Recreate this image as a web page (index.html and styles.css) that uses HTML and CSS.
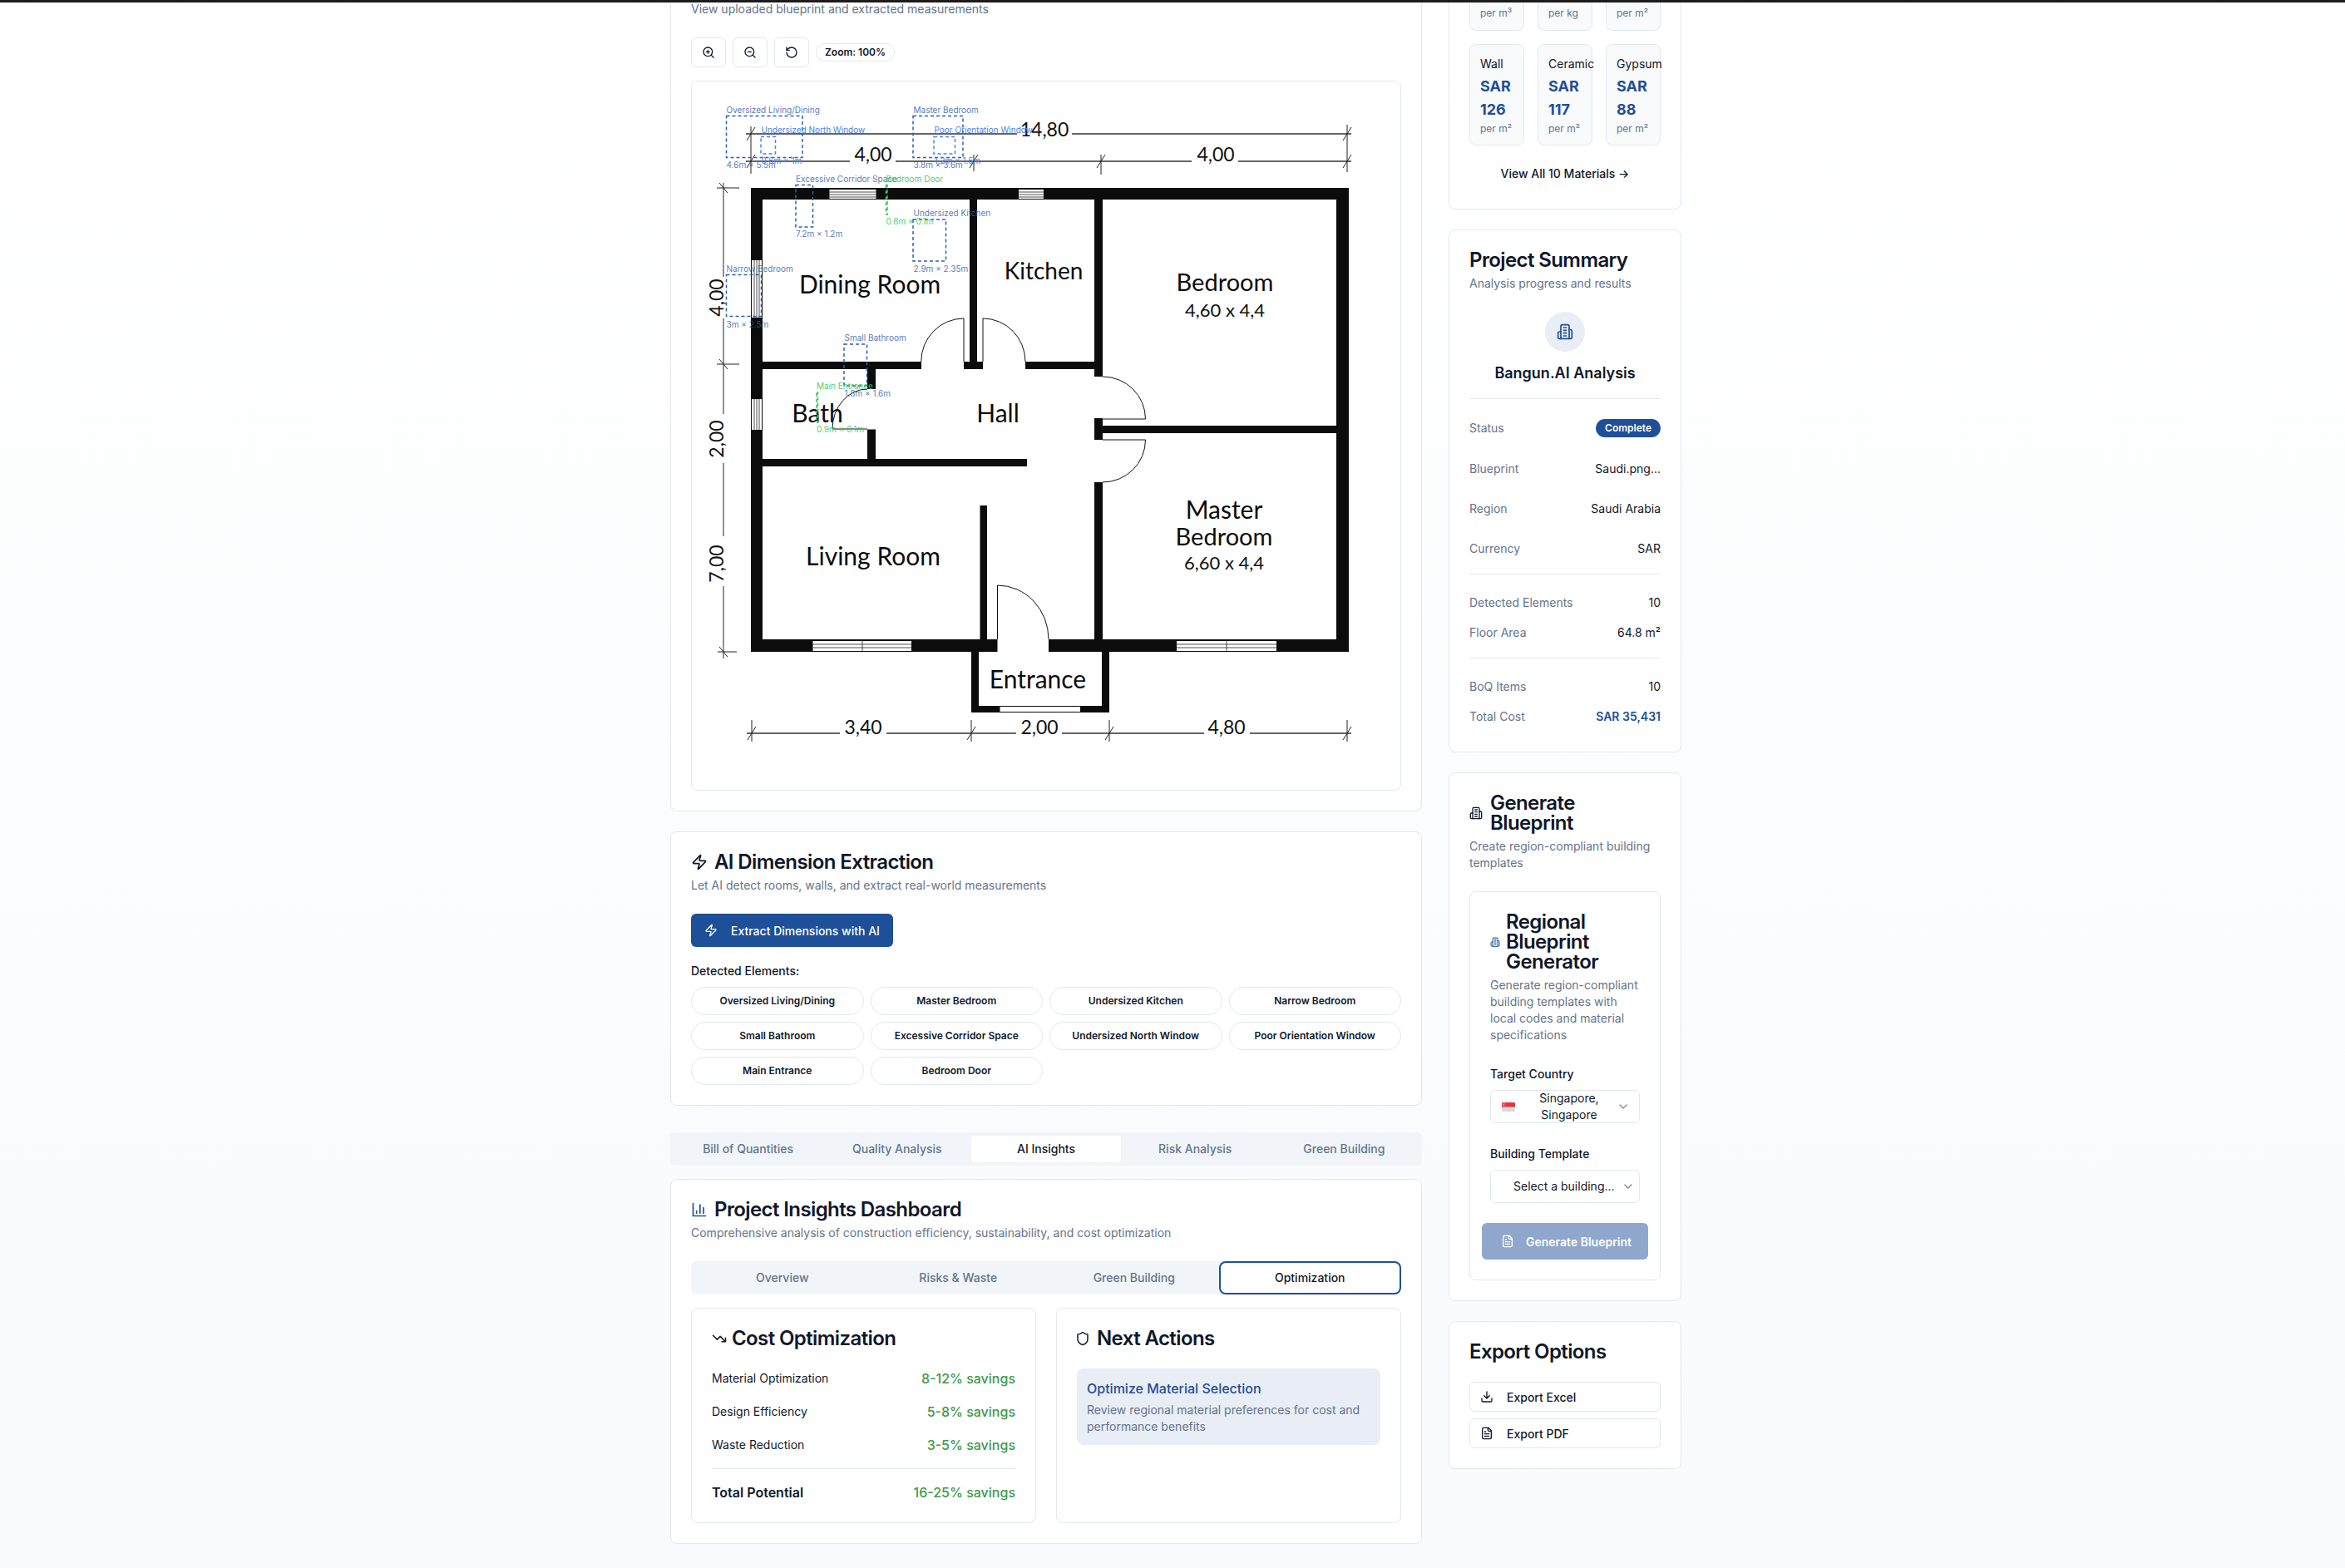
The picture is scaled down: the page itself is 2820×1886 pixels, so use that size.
FILE: index.html
```html
<!DOCTYPE html>
<html lang="en">
<head>
    <meta charset="UTF-8">
    <meta name="viewport" content="width=device-width, initial-scale=1.0">
    <title>Bangun.AI Analysis</title>
    <link rel="stylesheet" href="styles.css">
</head>
<body>

<div class="top-bar"></div>

<div class="page">
    <main class="left-col">

        <section class="card card-clipped">
            <p class="card-desc viewer-desc">View uploaded blueprint and extracted measurements</p>
            <div class="viewer-tools">
                <button class="tool-btn"><svg class="icon" viewBox="0 0 24 24"><circle cx="11" cy="11" r="8"/><path d="M21 21l-4.35-4.35M11 8v6M8 11h6"/></svg></button>
                <button class="tool-btn"><svg class="icon" viewBox="0 0 24 24"><circle cx="11" cy="11" r="8"/><path d="M21 21l-4.35-4.35M8 11h6"/></svg></button>
                <button class="tool-btn"><svg class="icon" viewBox="0 0 24 24"><path d="M3 12a9 9 0 1 0 9-9 9.75 9.75 0 0 0-6.74 2.74L3 8"/><path d="M3 3v5h5"/></svg></button>
                <span class="zoom-pill">Zoom: 100%</span>
            </div>
            <div class="plan-box">
                <!-- viewBox uses page coordinates so points can be read straight off the screenshot -->
                <svg class="plan" viewBox="832 98 852 852">
                    <g class="walls">
                        <rect x="903" y="226" width="719" height="14"/>
                        <rect x="903" y="226" width="14" height="558"/>
                        <rect x="1607" y="226" width="15" height="558"/>
                        <rect x="903" y="769" width="296.5" height="15"/>
                        <rect x="1261" y="769" width="361" height="15"/>
                        <rect x="1166" y="240" width="9" height="195"/>
                        <rect x="1316" y="240" width="10" height="213"/>
                        <rect x="917" y="435" width="191" height="9"/>
                        <rect x="1159" y="435" width="23" height="9"/>
                        <rect x="1233" y="435" width="83" height="9"/>
                        <rect x="1043" y="444" width="10" height="24"/>
                        <rect x="1043" y="516.5" width="10" height="36"/>
                        <rect x="917" y="552" width="318" height="9"/>
                        <rect x="1316" y="503" width="10" height="26"/>
                        <rect x="1326" y="512" width="281" height="9"/>
                        <rect x="1316" y="580" width="10" height="189"/>
                        <rect x="1178.5" y="608" width="8.5" height="161"/>
                        <rect x="1168" y="784" width="9" height="73"/>
                        <rect x="1325" y="784" width="9" height="73"/>
                        <rect x="1168" y="849" width="166" height="8"/>
                    </g>
                    <g class="windows">
                        <rect x="997.5" y="228" width="56" height="11"/>
                        <rect x="1225" y="228" width="30" height="11"/>
                        <rect x="904" y="313" width="12" height="69"/>
                        <rect x="904" y="480" width="12" height="37"/>
                        <rect x="977.5" y="771" width="118.5" height="12"/>
                        <rect x="1415" y="771" width="120" height="12"/>
                        <rect x="1202.5" y="850" width="96.5" height="6"/>
                    </g>
                    <path class="thin" d="M997.5 231H1053.5M997.5 234H1053.5M997.5 237H1053.5M1225 231H1255M1225 234H1255M1225 237H1255M907 313V382M910 313V382M913 313V382M907 480V517M910 480V517M913 480V517M977.5 775H1096M977.5 779H1096M1415 775H1535M1415 779H1535M1037 771V783M1475 771V783"/>
                    <path class="door" d="M1107.7 435A51.3 52 0 0 1 1159 383V435M1182 435V383A51 52 0 0 1 1233 435M1326 453A51.5 51 0 0 1 1377.5 504H1326M1326 529H1377.5A51.5 51 0 0 1 1326 580M1043 468A42 48 0 0 0 1001 516H1043M1199.5 769V704A61.5 65 0 0 1 1261 769"/>
                    <path class="dim" d="M897 161H1223M1289 161H1625M897 194H1022M1077 194H1433M1489 194H1625M898 882H1010M1066 882H1222M1277 882H1448M1503 882H1625"/>
                    <path class="dim-thin" d="M903 152V209M1171 186V206M1324 186V210M1620 150V207M870 220V333M870 383V498M870 557V645M870 705V792M862 226H889M862 438H889M863 784H886M904 866V892M1168 866V892M1334 866V892M1620 866V892"/>
                    <path class="dim-thin" d="M898 169L908 153M898 202L908 186M1166 202L1176 186M1319 202L1329 186M1615 169L1625 153M1615 202L1625 186M865 220L875 232M865 432L875 444M865 778L875 790M899 890L909 874M1163 890L1173 874M1329 890L1339 874M1615 890L1625 874"/>

                    <text class="dim-num" x="1256" y="164">14,80</text>
                    <text class="dim-num" x="1050" y="194">4,00</text>
                    <text class="dim-num" x="1462" y="194">4,00</text>
                    <text class="dim-num" x="1038" y="883">3,40</text>
                    <text class="dim-num" x="1250" y="883">2,00</text>
                    <text class="dim-num" x="1475" y="883">4,80</text>
                    <text class="dim-num" transform="rotate(-90 870 358)" x="870" y="358">4,00</text>
                    <text class="dim-num" transform="rotate(-90 870 528)" x="870" y="528">2,00</text>
                    <text class="dim-num" transform="rotate(-90 870 678)" x="870" y="678">7,00</text>

                    <text class="room" x="1046" y="352.5">Dining Room</text>
                    <text class="room room-kitchen" x="1255" y="335.5">Kitchen</text>
                    <text class="room room-tight" x="1473" y="349.5">Bedroom</text>
                    <text class="room-size" x="1473" y="380.5">4,60 x 4,4</text>
                    <text class="room" x="983" y="508">Bath</text>
                    <text class="room" x="1200" y="508">Hall</text>
                    <text class="room" x="1472" y="623.5">Master</text>
                    <text class="room room-tight" x="1472" y="655.5">Bedroom</text>
                    <text class="room-size" x="1472" y="684.5">6,60 x 4,4</text>
                    <text class="room" x="1050" y="679.5">Living Room</text>
                    <text class="room" x="1248" y="827.5">Entrance</text>

                    <g class="mark mark-navy">
                        <rect x="873.5" y="139.5" width="91.5" height="50"/>
                        <text x="873.5" y="135.5">Oversized Living/Dining</text>
                        <text x="873.5" y="201.5">4.6m × 5.5m</text>
                        <rect x="1098" y="139.5" width="60" height="50"/>
                        <text x="1098.5" y="135.5">Master Bedroom</text>
                        <text x="1098.5" y="201.5">3.8m × 3.6m</text>
                        <rect x="957" y="222.5" width="20.5" height="50.5"/>
                        <text x="957" y="218.5">Excessive Corridor Space</text>
                        <text x="957" y="285">7.2m × 1.2m</text>
                        <rect x="1098" y="264" width="39.5" height="50"/>
                        <text x="1098.5" y="260">Undersized Kitchen</text>
                        <text x="1098.5" y="326.5">2.9m × 2.35m</text>
                        <rect x="873.5" y="330.5" width="42" height="50"/>
                        <text x="873.5" y="326.5">Narrow Bedroom</text>
                        <text x="873.5" y="393.5">3m × 2.5m</text>
                        <rect x="1015" y="414" width="27.5" height="50"/>
                        <text x="1015.5" y="410">Small Bathroom</text>
                        <text x="1015.5" y="476.5">1.8m × 1.6m</text>
                    </g>
                    <g class="mark mark-sky">
                        <rect x="915" y="164.5" width="17.5" height="20.5"/>
                        <text x="915.5" y="160">Undersized North Window</text>
                        <text x="915.5" y="196.5">0.6m × 1m</text>
                        <rect x="1123" y="164.5" width="25.5" height="20.5"/>
                        <text x="1123.5" y="160">Poor Orientation Window</text>
                        <text x="1123.5" y="196.5">1.2m × 1.5m</text>
                    </g>
                    <g class="mark mark-green">
                        <rect x="1065.5" y="222.5" width="1.5" height="35.5"/>
                        <text x="1065.5" y="218.5">Bedroom Door</text>
                        <text x="1065.5" y="270">0.8m × 0.1m</text>
                        <rect x="982" y="472" width="1.5" height="36"/>
                        <text x="982" y="468">Main Entrance</text>
                        <text x="982" y="520">0.9m × 0.1m</text>
                    </g>
                </svg>
            </div>
        </section>

        <section class="card">
            <h2 class="card-title"><svg class="icon icon-20" viewBox="0 0 24 24"><path d="M4 14a1 1 0 0 1-.78-1.63l9.9-10.2a.5.5 0 0 1 .86.46l-1.92 6.02A1 1 0 0 0 13 10h7a1 1 0 0 1 .78 1.63l-9.9 10.2a.5.5 0 0 1-.86-.46l1.92-6.02A1 1 0 0 0 11 14z"/></svg>AI Dimension Extraction</h2>
            <p class="card-desc">Let AI detect rooms, walls, and extract real-world measurements</p>
            <button class="primary-btn"><svg class="icon" viewBox="0 0 24 24"><path d="M4 14a1 1 0 0 1-.78-1.63l9.9-10.2a.5.5 0 0 1 .86.46l-1.92 6.02A1 1 0 0 0 13 10h7a1 1 0 0 1 .78 1.63l-9.9 10.2a.5.5 0 0 1-.86-.46l1.92-6.02A1 1 0 0 0 11 14z"/></svg>Extract Dimensions with AI</button>
            <div class="detected-label">Detected Elements:</div>
            <div class="chips">
                <span class="chip">Oversized Living/Dining</span>
                <span class="chip">Master Bedroom</span>
                <span class="chip">Undersized Kitchen</span>
                <span class="chip">Narrow Bedroom</span>
                <span class="chip">Small Bathroom</span>
                <span class="chip">Excessive Corridor Space</span>
                <span class="chip">Undersized North Window</span>
                <span class="chip">Poor Orientation Window</span>
                <span class="chip">Main Entrance</span>
                <span class="chip">Bedroom Door</span>
            </div>
        </section>

        <nav class="tabs tabs-main">
            <span class="tab">Bill of Quantities</span>
            <span class="tab">Quality Analysis</span>
            <span class="tab tab-active">AI Insights</span>
            <span class="tab">Risk Analysis</span>
            <span class="tab">Green Building</span>
        </nav>

        <section class="card card-insights">
            <h2 class="card-title"><svg class="icon icon-20 icon-blue" viewBox="0 0 24 24"><path d="M3 3v18h18M18 17V9M13 17V5M8 17v-3"/></svg>Project Insights Dashboard</h2>
            <p class="card-desc">Comprehensive analysis of construction efficiency, sustainability, and cost optimization</p>
            <nav class="tabs tabs-sub">
                <span class="tab">Overview</span>
                <span class="tab">Risks &amp; Waste</span>
                <span class="tab">Green Building</span>
                <span class="tab tab-focus">Optimization</span>
            </nav>
            <div class="insight-grid">
                <div class="sub-card">
                    <h3 class="card-title sub-title"><svg class="icon icon-18" viewBox="0 0 24 24"><path d="M22 17l-8.5-8.5-5 5L2 7M16 17h6v-6"/></svg>Cost Optimization</h3>
                    <div class="saving-row"><span>Material Optimization</span><b>8-12% savings</b></div>
                    <div class="saving-row"><span>Design Efficiency</span><b>5-8% savings</b></div>
                    <div class="saving-row"><span>Waste Reduction</span><b>3-5% savings</b></div>
                    <div class="saving-row saving-total"><span>Total Potential</span><b>16-25% savings</b></div>
                </div>
                <div class="sub-card">
                    <h3 class="card-title sub-title"><svg class="icon icon-18 icon-shield" viewBox="0 0 24 24"><path d="M20 13c0 5-3.5 7.5-7.66 8.95a1 1 0 0 1-.67-.01C7.5 20.5 4 18 4 13V6a1 1 0 0 1 1-1c2 0 4.5-1.2 6.24-2.72a1.17 1.17 0 0 1 1.52 0C14.51 3.81 17 5 19 5a1 1 0 0 1 1 1z"/></svg>Next Actions</h3>
                    <div class="action-box">
                        <div class="action-title">Optimize Material Selection</div>
                        <div class="action-text">Review regional material preferences for cost and performance benefits</div>
                    </div>
                </div>
            </div>
        </section>
    </main>

    <aside class="right-col">
        <section class="card card-clipped materials-card">
            <div class="material-grid">
                <div class="material material-clipped"><small>per m³</small></div>
                <div class="material material-clipped"><small>per kg</small></div>
                <div class="material material-clipped"><small>per m²</small></div>
                <div class="material"><span>Wall</span><strong>SAR 126</strong><small>per m²</small></div>
                <div class="material"><span>Ceramic</span><strong>SAR 117</strong><small>per m²</small></div>
                <div class="material"><span>Gypsum</span><strong>SAR 88</strong><small>per m²</small></div>
            </div>
            <div class="view-all">View All 10 Materials →</div>
        </section>

        <section class="card">
            <h2 class="card-title">Project Summary</h2>
            <p class="card-desc">Analysis progress and results</p>
            <div class="summary-icon"><svg class="icon icon-20 icon-blue" viewBox="0 0 24 24"><path d="M6 22V4a2 2 0 0 1 2-2h8a2 2 0 0 1 2 2v18Z"/><path d="M6 12H4a2 2 0 0 0-2 2v6a2 2 0 0 0 2 2h2M18 9h2a2 2 0 0 1 2 2v9a2 2 0 0 1-2 2h-2M10 6h4M10 10h4M10 14h4M10 18h4"/></svg></div>
            <div class="summary-name">Bangun.AI Analysis</div>
            <div class="summary-group group-wide">
                <div class="summary-row"><span>Status</span><em class="badge">Complete</em></div>
                <div class="summary-row"><span>Blueprint</span><b>Saudi.png...</b></div>
                <div class="summary-row"><span>Region</span><b>Saudi Arabia</b></div>
                <div class="summary-row"><span>Currency</span><b>SAR</b></div>
            </div>
            <div class="summary-group">
                <div class="summary-row"><span>Detected Elements</span><b>10</b></div>
                <div class="summary-row"><span>Floor Area</span><b>64.8 m²</b></div>
            </div>
            <div class="summary-group summary-last">
                <div class="summary-row"><span>BoQ Items</span><b>10</b></div>
                <div class="summary-row"><span>Total Cost</span><b class="total-cost">SAR 35,431</b></div>
            </div>
        </section>

        <section class="card">
            <h2 class="card-title"><svg class="icon icon-gen" viewBox="0 0 24 24"><path d="M6 22V4a2 2 0 0 1 2-2h8a2 2 0 0 1 2 2v18Z"/><path d="M6 12H4a2 2 0 0 0-2 2v6a2 2 0 0 0 2 2h2M18 9h2a2 2 0 0 1 2 2v9a2 2 0 0 1-2 2h-2M10 6h4M10 10h4M10 14h4M10 18h4"/></svg><span>Generate Blueprint</span></h2>
            <p class="card-desc">Create region-compliant building templates</p>
            <div class="sub-card generator">
                <h3 class="card-title"><svg class="icon icon-reg icon-blue" viewBox="0 0 24 24"><path d="M6 22V4a2 2 0 0 1 2-2h8a2 2 0 0 1 2 2v18Z"/><path d="M6 12H4a2 2 0 0 0-2 2v6a2 2 0 0 0 2 2h2M18 9h2a2 2 0 0 1 2 2v9a2 2 0 0 1-2 2h-2M10 6h4M10 10h4M10 14h4M10 18h4"/></svg><span>Regional Blueprint Generator</span></h3>
                <p class="card-desc">Generate region-compliant building templates with local codes and material specifications</p>
                <label class="field-label">Target Country</label>
                <div class="select">
                    <svg class="flag" viewBox="0 0 16 11"><rect width="16" height="11" rx="1.5" fill="#d9d9d9"/><path d="M0 5.5V1.5A1.5 1.5 0 0 1 1.5 0h13A1.5 1.5 0 0 1 16 1.5v4z" fill="#e0343c"/><circle cx="3" cy="2.8" r="1.5" fill="#fff"/><circle cx="3.6" cy="2.8" r="1.3" fill="#e0343c"/></svg>
                    <span class="select-text select-country">Singapore, Singapore</span>
                    <svg class="icon chevron" viewBox="0 0 24 24"><path d="M6 9l6 6 6-6"/></svg>
                </div>
                <label class="field-label">Building Template</label>
                <div class="select">
                    <span class="select-text select-empty">Select a building...</span>
                    <svg class="icon chevron" viewBox="0 0 24 24"><path d="M6 9l6 6 6-6"/></svg>
                </div>
                <button class="primary-btn generate-btn"><svg class="icon" viewBox="0 0 24 24"><path d="M15 2H6a2 2 0 0 0-2 2v16a2 2 0 0 0 2 2h12a2 2 0 0 0 2-2V7Z"/><path d="M14 2v4a2 2 0 0 0 2 2h4M10 9H8M16 13H8M16 17H8"/></svg>Generate Blueprint</button>
            </div>
        </section>

        <section class="card">
            <h2 class="card-title export-title">Export Options</h2>
            <button class="export-btn"><svg class="icon" viewBox="0 0 24 24"><path d="M21 15v4a2 2 0 0 1-2 2H5a2 2 0 0 1-2-2v-4M7 10l5 5 5-5M12 15V3"/></svg>Export Excel</button>
            <button class="export-btn"><svg class="icon" viewBox="0 0 24 24"><path d="M15 2H6a2 2 0 0 0-2 2v16a2 2 0 0 0 2 2h12a2 2 0 0 0 2-2V7Z"/><path d="M14 2v4a2 2 0 0 0 2 2h4M10 9H8M16 13H8M16 17H8"/></svg>Export PDF</button>
        </section>
    </aside>
</div>

</body>
</html>
```

FILE: styles.css
```css
* {
    box-sizing: border-box;
}
body {
    margin: 0;
    height: 1886px;
    overflow: hidden;
    font-family: Inter, "Liberation Sans", sans-serif;
    font-size: 14px;
    line-height: 20px;
    color: #0f172a;
    background: linear-gradient(180deg, #ffffff 0%, #f8fafc 100%);
}
p, h2, h3 {
    margin: 0;
}
button {
    font-family: inherit;
    cursor: pointer;
}
.top-bar {
    position: fixed;
    top: 0;
    left: 0;
    right: 0;
    height: 3px;
    background: #1c1c1e;
}
.page {
    display: flex;
    gap: 32px;
    padding-left: 806px;
}
.left-col {
    width: 904px;
    display: flex;
    flex-direction: column;
}
.right-col {
    width: 280px;
    display: flex;
    flex-direction: column;
    gap: 24px;
}

/* cards */
.card {
    background: #fff;
    border: 1px solid #e2e8f0;
    border-radius: 8px;
    padding: 24px;
}
.card-clipped {
    border-top: none;
    border-top-left-radius: 0;
    border-top-right-radius: 0;
    padding-top: 0;
}
.left-col .card + .card {
    margin-top: 24px;
}
.card-title {
    display: flex;
    align-items: center;
    gap: 8px;
    font-size: 24px;
    line-height: 24px;
    font-weight: 600;
    letter-spacing: -0.6px;
}
.card-desc {
    margin-top: 6px;
    color: #64748b;
}
.viewer-desc {
    margin-top: 0;
    padding-top: 1px;
}

/* icons */
.icon {
    width: 16px;
    height: 16px;
    flex-shrink: 0;
    fill: none;
    stroke: currentColor;
    stroke-width: 2;
    stroke-linecap: round;
    stroke-linejoin: round;
}
.icon-20 {
    width: 20px;
    height: 20px;
}
.icon-18 {
    width: 18px;
    height: 18px;
}
.icon-shield {
    margin: 0 2px 0 -2px;
}
.icon-blue {
    color: #1e4f99;
}

/* blueprint viewer */
.viewer-tools {
    display: flex;
    align-items: center;
    gap: 8px;
    margin-top: 24px;
}
.tool-btn {
    width: 42px;
    height: 36px;
    display: flex;
    align-items: center;
    justify-content: center;
    padding: 0;
    color: #0f172a;
    background: #fff;
    border: 1px solid #e2e8f0;
    border-radius: 6px;
}
.zoom-pill {
    height: 22px;
    padding: 0 10px;
    font-size: 12px;
    line-height: 20px;
    font-weight: 600;
    border: 1px solid #e2e8f0;
    border-radius: 11px;
}
.plan-box {
    margin-top: 16px;
    height: 854px;
    background: #fff;
    border: 1px solid #e2e8f0;
    border-radius: 8px;
    overflow: hidden;
}
.plan {
    display: block;
    width: 852px;
    height: 852px;
}
.walls {
    fill: #0c0c0c;
}
.windows {
    fill: #fff;
}
.thin {
    fill: none;
    stroke: #222;
    stroke-width: 0.8;
}
.door {
    fill: none;
    stroke: #111;
    stroke-width: 1;
}
.dim {
    fill: none;
    stroke: #333;
    stroke-width: 1.5;
}
.dim-thin {
    fill: none;
    stroke: #222;
    stroke-width: 1;
}
.dim-num {
    font-family: Lato, sans-serif;
    font-size: 23px;
    text-anchor: middle;
    fill: #111;
}
.room {
    font-family: Lato, sans-serif;
    font-size: 30px;
    text-anchor: middle;
    fill: #0c0c0c;
}
.room-tight {
    font-size: 29px;
}
.room-kitchen {
    font-size: 28px;
}
.room-size {
    font-family: Lato, sans-serif;
    font-size: 22px;
    text-anchor: middle;
    fill: #111;
}
.mark {
    font-size: 10px;
}
.mark rect {
    fill: none;
    stroke-width: 1.5;
    stroke-dasharray: 4 3;
}
.mark-navy rect {
    stroke: #2f62ad;
}
.mark-navy text {
    fill: #2f62ad;
    fill-opacity: 0.85;
}
.mark-sky rect {
    stroke: #4a80ea;
}
.mark-sky text {
    fill: #4a80ea;
}
.mark-green rect {
    stroke: #34c759;
}
.mark-green text {
    fill: #34c759;
    fill-opacity: 0.9;
}

/* extraction */
.primary-btn {
    display: flex;
    align-items: center;
    gap: 16px;
    margin-top: 24px;
    height: 40px;
    padding: 0 16px;
    font-size: 14px;
    font-weight: 500;
    color: #fff;
    background: #1e4f99;
    border: none;
    border-radius: 6px;
}
.detected-label {
    margin-top: 19px;
    font-weight: 500;
}
.chips {
    display: grid;
    grid-template-columns: repeat(4, 1fr);
    gap: 8px;
    margin-top: 9px;
}
.chip {
    height: 34px;
    font-size: 12px;
    font-weight: 600;
    line-height: 32px;
    text-align: center;
    background: #fff;
    border: 1px solid #e2e8f0;
    border-radius: 17px;
}

/* tabs */
.tabs {
    display: grid;
    height: 40px;
    padding: 4px;
    background: #f1f5f9;
    border-radius: 6px;
}
.tabs-main {
    grid-template-columns: repeat(5, 1fr);
    margin: 32px 0 16px;
}
.tabs-sub {
    grid-template-columns: repeat(4, 1fr);
    margin-top: 24px;
}
.tab {
    font-weight: 500;
    line-height: 32px;
    text-align: center;
    color: #64748b;
    border-radius: 4px;
}
.tab-active {
    color: #0f172a;
    background: #fff;
}
.tab-focus {
    color: #0f172a;
    background: #fff;
    box-shadow: 0 0 0 2px #fff, 0 0 0 4px #1e4f99;
}
.left-col .card-insights {
    margin-top: 0;
}

/* insights */
.insight-grid {
    display: grid;
    grid-template-columns: 1fr 1fr;
    gap: 24px;
    margin-top: 16px;
}
.sub-card {
    padding: 24px;
    height: 259px;
    background: #fff;
    border: 1px solid #e2e8f0;
    border-radius: 8px;
}
.sub-title {
    gap: 6px;
    margin-bottom: 24px;
}
.saving-row {
    display: flex;
    justify-content: space-between;
    align-items: center;
    height: 24px;
    margin-bottom: 16px;
}
.saving-row b {
    font-size: 16px;
    font-weight: 500;
    color: #3c9a4a;
}
.saving-total {
    margin-bottom: 0;
    height: 39px;
    align-items: flex-end;
    border-top: 1px solid #e2e8f0;
}
.saving-total span {
    font-size: 16px;
    font-weight: 600;
}
.action-box {
    padding: 12px;
    background: #e9edf5;
    border-radius: 8px;
}
.action-title {
    font-size: 16px;
    line-height: 24px;
    font-weight: 500;
    color: #1e4f99;
}
.action-text {
    margin-top: 4px;
    color: #64748b;
}

/* materials */
.material-grid {
    display: grid;
    grid-template-columns: repeat(3, 66px);
    gap: 16px;
}
.material {
    height: 122px;
    padding: 13px 12px;
    background: #f8fafc;
    border: 1px solid #e2e8f0;
    border-radius: 8px;
    white-space: nowrap;
}
.material-clipped {
    height: 37px;
    padding-top: 8px;
    border-top: none;
    border-top-left-radius: 0;
    border-top-right-radius: 0;
}
.material span {
    display: block;
}
.material strong {
    display: block;
    width: 40px;
    margin-top: 3px;
    font-size: 18px;
    line-height: 28px;
    font-weight: 700;
    white-space: normal;
    color: #1e4f99;
}
.material small {
    display: block;
    font-size: 12px;
    line-height: 16px;
    color: #64748b;
}
.material strong + small {
    margin-top: 1px;
}
.view-all {
    margin-top: 16px;
    height: 36px;
    line-height: 36px;
    font-weight: 500;
    text-align: center;
}

/* summary */
.summary-icon {
    display: flex;
    align-items: center;
    justify-content: center;
    width: 48px;
    height: 48px;
    margin: 24px auto 14px;
    background: #e9edf5;
    border-radius: 50%;
}
.summary-name {
    font-size: 18px;
    line-height: 24px;
    font-weight: 600;
    text-align: center;
}
.summary-group {
    display: flex;
    flex-direction: column;
    gap: 16px;
    padding: 24px 0 20px;
    border-top: 1px solid #e2e8f0;
}
.group-wide {
    gap: 28px;
    margin-top: 18px;
}
.summary-last {
    padding-bottom: 8px;
}
.summary-row {
    display: flex;
    justify-content: space-between;
    align-items: center;
}
.summary-row span {
    color: #64748b;
}
.summary-row b {
    font-weight: 400;
}
.badge {
    height: 22px;
    padding: 0 11px;
    font-size: 12px;
    font-style: normal;
    line-height: 22px;
    font-weight: 600;
    color: #fff;
    background: #1e4f99;
    border-radius: 11px;
}
.total-cost {
    color: #1e4f99;
}
.summary-row .total-cost {
    font-weight: 600;
}

/* generator */
.icon-gen {
    margin-right: 1px;
}
.generator {
    height: auto;
    margin-top: 24px;
}
.icon-reg {
    width: 12px;
    height: 12px;
    margin-right: -1px;
}
.field-label {
    display: block;
    margin-top: 27px;
    font-weight: 500;
}
.select {
    display: flex;
    align-items: center;
    gap: 8px;
    height: 40px;
    margin-top: 9px;
    padding: 0 11px 0 13px;
    background: #fff;
    border: 1px solid #e2e8f0;
    border-radius: 6px;
}
.flag {
    width: 16px;
    height: 11px;
    flex-shrink: 0;
}
.select-text {
    flex: 1;
    text-align: center;
}
.select-country {
    padding-left: 8px;
}
.select-empty {
    padding-left: 14px;
    white-space: nowrap;
}
.chevron {
    opacity: 0.5;
}
.generate-btn {
    width: 200px;
    height: 44px;
    margin: 24px 0 0 -10px;
    padding: 0 0 0 23px;
    gap: 14px;
    font-weight: 600;
    white-space: nowrap;
    background: #8fa7cc;
}

/* export */
.export-title {
    margin-bottom: 24px;
}
.export-btn {
    display: flex;
    align-items: center;
    gap: 16px;
    width: 100%;
    height: 36px;
    padding: 0 12px;
    font-size: 14px;
    font-weight: 500;
    color: #0f172a;
    background: #fff;
    border: 1px solid #e2e8f0;
    border-radius: 6px;
}
.export-btn + .export-btn {
    margin-top: 8px;
}
```
